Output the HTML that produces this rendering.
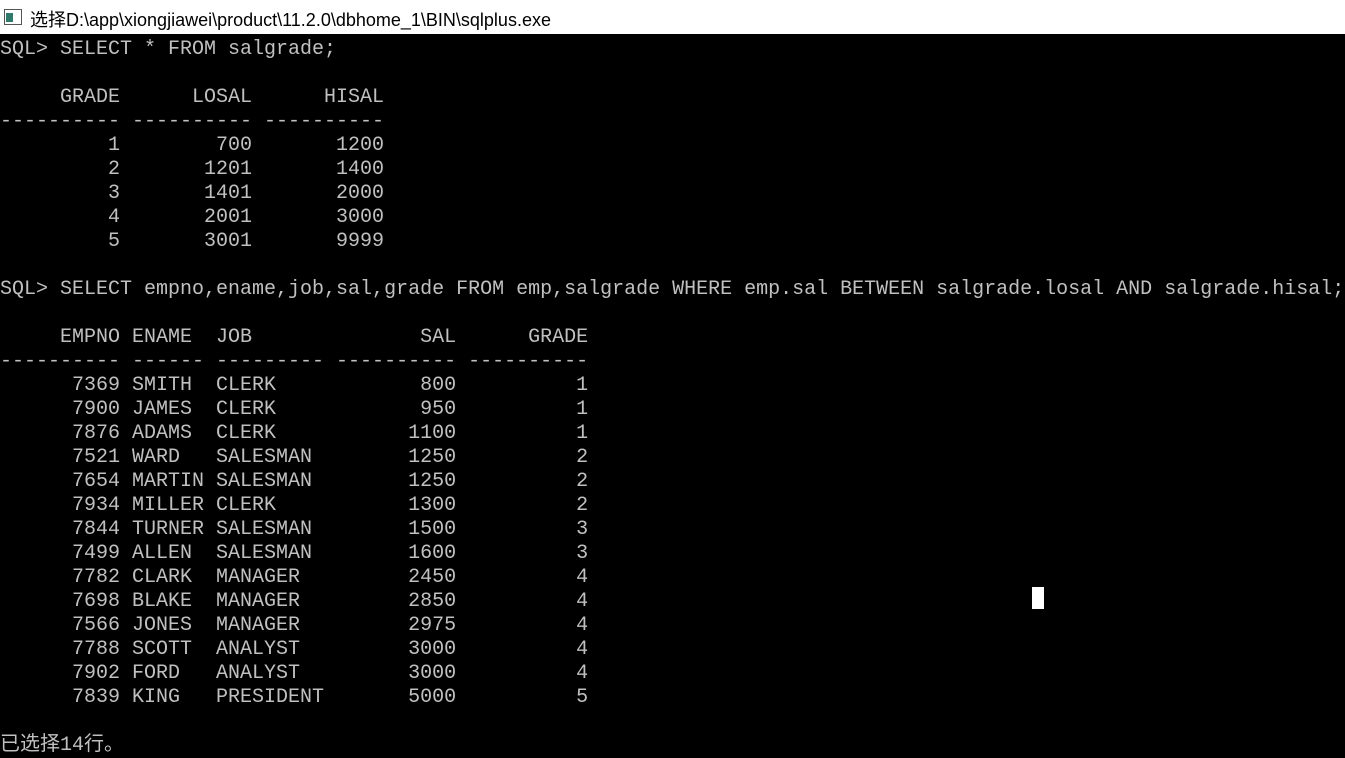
<!DOCTYPE html>
<html><head><meta charset="utf-8"><style>
body{margin:0;width:1345px;height:756px;overflow:hidden;background:#000;}
#t{position:absolute;left:0;top:0;width:1345px;height:34px;background:#fff;}
#t span{position:absolute;left:30px;top:6px;font:18px "Liberation Sans","Noto Sans CJK SC",sans-serif;color:#000;white-space:nowrap}
#ic{position:absolute;left:4px;top:9px;width:16px;height:14px;border:1px solid #555;background:#fff}
#ic i{position:absolute;left:1px;top:3px;width:7px;height:9px;background:#2f7a6a}
pre{position:absolute;left:0;top:38px;margin:0;font:20px/24px "Liberation Mono","Noto Sans CJK SC",monospace;color:#c0c0c0;}
#cur{position:absolute;left:1032px;top:587px;width:12px;height:22px;background:#fff}
</style></head><body>
<div id="t"><div id="ic"><i></i></div><span>选择D:\app\xiongjiawei\product\11.2.0\dbhome_1\BIN\sqlplus.exe</span></div>
<pre>SQL&gt; SELECT * FROM salgrade;

     GRADE      LOSAL      HISAL
---------- ---------- ----------
         1        700       1200
         2       1201       1400
         3       1401       2000
         4       2001       3000
         5       3001       9999

SQL&gt; SELECT empno,ename,job,sal,grade FROM emp,salgrade WHERE emp.sal BETWEEN salgrade.losal AND salgrade.hisal;

     EMPNO ENAME  JOB              SAL      GRADE
---------- ------ --------- ---------- ----------
      7369 SMITH  CLERK            800          1
      7900 JAMES  CLERK            950          1
      7876 ADAMS  CLERK           1100          1
      7521 WARD   SALESMAN        1250          2
      7654 MARTIN SALESMAN        1250          2
      7934 MILLER CLERK           1300          2
      7844 TURNER SALESMAN        1500          3
      7499 ALLEN  SALESMAN        1600          3
      7782 CLARK  MANAGER         2450          4
      7698 BLAKE  MANAGER         2850          4
      7566 JONES  MANAGER         2975          4
      7788 SCOTT  ANALYST         3000          4
      7902 FORD   ANALYST         3000          4
      7839 KING   PRESIDENT       5000          5

已选择14行。</pre>
<div id="cur"></div>
</body></html>
